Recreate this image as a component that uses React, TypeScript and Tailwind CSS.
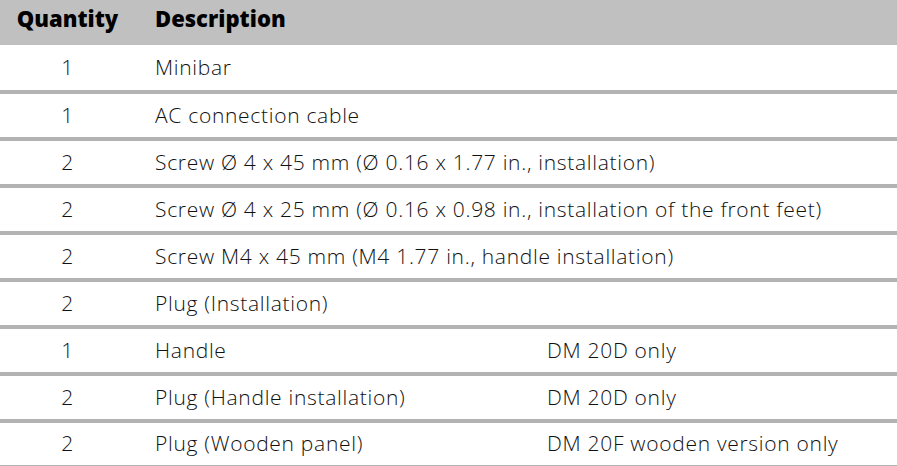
import React from 'react';

const rows = [
  { qty: '1', desc: 'Minibar', note: '' },
  { qty: '1', desc: 'AC connection cable', note: '' },
  { qty: '2', desc: 'Screw Ø 4 x 45 mm (Ø 0.16 x 1.77 in., installation)', note: '' },
  { qty: '2', desc: 'Screw Ø 4 x 25 mm (Ø 0.16 x 0.98 in., installation of the front feet)', note: '' },
  { qty: '2', desc: 'Screw M4 x 45 mm (M4 1.77 in., handle installation)', note: '' },
  { qty: '2', desc: 'Plug (Installation)', note: '' },
  { qty: '1', desc: 'Handle', note: 'DM 20D only' },
  { qty: '2', desc: 'Plug (Handle installation)', note: 'DM 20D only' },
  { qty: '2', desc: 'Plug (Wooden panel)', note: 'DM 20F wooden version only' },
];

export default function App() {
  return (
    <div className="w-[897px] h-[466px] overflow-hidden bg-white text-[#111] font-['Open_Sans',sans-serif]">
      <div className="grid grid-cols-[135px_392px_1fr] h-[45px] items-center pb-2 bg-[#c0c0c0] text-[22px] font-extrabold text-black">
        <div className="text-center">Quantity</div>
        <div className="pl-5">Description</div>
        <div />
      </div>
      {rows.map((row, i) => (
        <div
          key={i}
          className={`grid grid-cols-[135px_392px_1fr] items-center text-[21px] font-light tracking-[0.7px] border-b-4 border-[#b3b3b3] ${
            i === 0 ? 'h-[49px]' : i === rows.length - 1 ? 'h-[46px]' : 'h-[47px]'
          }`}
        >
          <div className="text-center">{row.qty}</div>
          <div className="pl-5 whitespace-nowrap">{row.desc}</div>
          <div className="pl-5 whitespace-nowrap">{row.note}</div>
        </div>
      ))}
    </div>
  );
}
